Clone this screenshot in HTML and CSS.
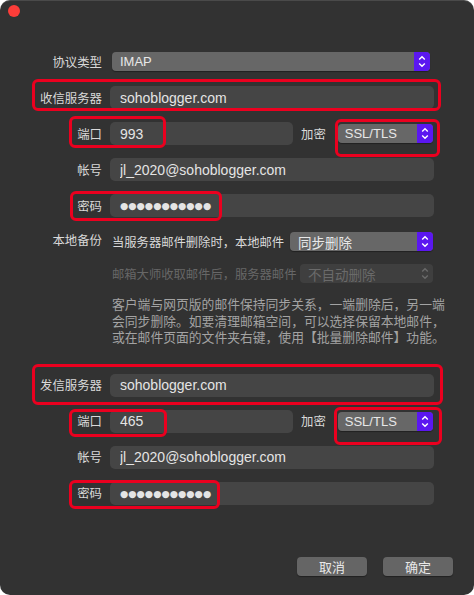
FILE: index.html
```html
<!DOCTYPE html>
<html lang="zh-CN">
<head>
<meta charset="UTF-8" />
<title>账户设置</title>
<link rel="stylesheet" href="styles.css">
</head>
<body>
<div class="window">
  <div class="titlebar"><span class="close"></span></div>

  <!-- 收信 -->
  <div class="form">
    <label class="lbl">协议类型</label>
    <div class="popup proto"><span>IMAP</span><span class="stepper"><svg viewBox="0 0 16 19" width="16" height="19"><path d="M5.2 7.6 8 4.8l2.8 2.8M5.2 11.4 8 14.2l2.8-2.8" /></svg></span></div>

    <label class="lbl">收信服务器</label>
    <input class="field" value="sohoblogger.com">

    <label class="lbl">端口</label>
    <div class="port-row">
      <input class="field port" value="993">
      <span class="lbl">加密</span>
      <div class="popup ssl"><span>SSL/TLS</span><span class="stepper"><svg viewBox="0 0 16 19" width="16" height="19"><path d="M5.2 7.6 8 4.8l2.8 2.8M5.2 11.4 8 14.2l2.8-2.8" /></svg></span></div>
    </div>

    <label class="lbl">帐号</label>
    <input class="field" value="jl_2020@sohoblogger.com">

    <label class="lbl">密码</label>
    <div class="field secret">●●●●●●●●●●●</div>

    <label class="lbl top">本地备份</label>
    <div class="backup">
      <div class="sub-row">
        <span>当服务器邮件删除时，本地邮件</span>
        <div class="popup sync"><span>同步删除</span><span class="stepper"><svg viewBox="0 0 16 19" width="16" height="19"><path d="M5.2 7.6 8 4.8l2.8 2.8M5.2 11.4 8 14.2l2.8-2.8" /></svg></span></div>
      </div>
      <div class="sub-row disabled">
        <span>邮箱大师收取邮件后，服务器邮件</span>
        <div class="popup off"><span>不自动删除</span><span class="stepper"><svg viewBox="0 0 16 19" width="16" height="19"><path d="M5.2 7.6 8 4.8l2.8 2.8M5.2 11.4 8 14.2l2.8-2.8" /></svg></span></div>
      </div>
      <p class="note">客户端与网页版的邮件保持同步关系，一端删除后，另一端<br>会同步删除。如要清理邮箱空间，可以选择保留本地邮件，<br>或在邮件页面的文件夹右键，使用【批量删除邮件】功能。</p>
    </div>
  </div>

  <!-- 发信 -->
  <div class="form send">
    <label class="lbl">发信服务器</label>
    <input class="field" value="sohoblogger.com">

    <label class="lbl">端口</label>
    <div class="port-row">
      <input class="field port" value="465">
      <span class="lbl">加密</span>
      <div class="popup ssl"><span>SSL/TLS</span><span class="stepper"><svg viewBox="0 0 16 19" width="16" height="19"><path d="M5.2 7.6 8 4.8l2.8 2.8M5.2 11.4 8 14.2l2.8-2.8" /></svg></span></div>
    </div>

    <label class="lbl">帐号</label>
    <input class="field" value="jl_2020@sohoblogger.com">

    <label class="lbl">密码</label>
    <div class="field secret">●●●●●●●●●●●</div>
  </div>

  <div class="actions">
    <button class="btn">取消</button>
    <button class="btn">确定</button>
  </div>

  <!-- 标注框 -->
  <div class="mark mark-in-host"></div>
  <div class="mark mark-in-port"></div>
  <div class="mark mark-in-ssl"></div>
  <div class="mark mark-in-pass"></div>
  <div class="mark mark-out-host"></div>
  <div class="mark mark-out-port"></div>
  <div class="mark mark-out-ssl"></div>
  <div class="mark mark-out-pass"></div>
</div>
</body>
</html>
```

FILE: styles.css
```css
* { box-sizing: border-box; }
body {
  margin: 0;
  background: #fff;
  font-family: "Liberation Sans", "Noto Sans CJK SC", sans-serif;
}
.window {
  position: relative;
  width: 474px;
  height: 595px;
  background: #323232;
  border-radius: 10px;
  box-shadow: inset 0 1px 0 rgba(255,255,255,0.12);
  overflow: hidden;
}
.titlebar {
  height: 22px;
  display: flex;
  align-items: center;
  padding-left: 8px;
}
.close {
  width: 12px;
  height: 12px;
  border-radius: 50%;
  background: #fc3d39;
}
.form {
  display: grid;
  grid-template-columns: 102px 324px;
  grid-auto-rows: minmax(23px, auto);
  column-gap: 8px;
  row-gap: 13px;
  align-items: center;
  margin-top: 28px;
}
.form.send { margin-top: 27px; }
.lbl {
  justify-self: end;
  font-size: 12.4px;
  color: #d9d9d9;
  white-space: nowrap;
}
.lbl.top {
  align-self: start;
  line-height: 23px;
}
.field {
  height: 23px;
  width: 100%;
  border: none;
  border-radius: 5px;
  background: #454545;
  color: #e4e4e4;
  font-family: inherit;
  font-size: 14px;
  padding: 0 10px;
  outline: none;
  margin: 0;
}
.secret {
  display: flex;
  align-items: center;
  font-family: "DejaVu Sans", sans-serif;
  font-size: 9.5px;
  letter-spacing: 0;
  color: #e4e4e4;
}
.popup {
  display: flex;
  align-items: center;
  height: 19px;
  background: #676767;
  border-radius: 4px;
  padding-left: 8px;
  font-size: 13px;
  color: #e8e8e8;
  overflow: hidden;
  box-shadow: 0 1px 1px rgba(0,0,0,0.35);
}
.stepper {
  margin-left: auto;
  width: 16px;
  height: 19px;
  flex: none;
  background: #5b17f0;
}
.stepper svg { display: block; }
.stepper path {
  fill: none;
  stroke: #fff;
  stroke-width: 1.4;
}
.popup.proto { margin: 0 4px 0 2px; }
.port-row {
  display: flex;
  align-items: center;
}
.port { width: 183px; flex: none; }
.port-row .lbl { margin-left: 8px; }
.port-row .popup.ssl {
  flex: 1;
  margin: 0 1.5px 0 12px;
  padding-left: 7px;
}
.backup {
  display: flex;
  flex-direction: column;
}
.sub-row {
  display: flex;
  align-items: center;
  height: 23px;
  font-size: 12.3px;
  color: #d9d9d9;
  padding-left: 2px;
}
.sub-row .popup {
  margin-left: auto;
  margin-right: 1px;
  font-size: 13.5px;
}
.popup.sync { width: 143px; }
.sub-row.disabled {
  margin-top: 9px;
  color: #676767;
}
.popup.off {
  width: 133px;
  background: #3f3f3f;
  color: #6a6a6a;
  box-shadow: none;
}
.popup.off .stepper { background: none; }
.popup.off .stepper path { stroke: #6a6a6a; }
.note {
  margin: 12px 0 0 2px;
  font-size: 12.8px;
  line-height: 16.5px;
  color: #a3a3a3;
  white-space: nowrap;
}
.actions {
  display: flex;
  justify-content: flex-end;
  gap: 16px;
  margin-top: 52px;
  padding-right: 21px;
}
.btn {
  width: 70px;
  height: 19px;
  border: none;
  border-radius: 4px;
  background: #656565;
  color: #e8e8e8;
  font-family: inherit;
  font-size: 13px;
  padding: 0;
  box-shadow: 0 1px 1px rgba(0,0,0,0.35);
}
/* red annotation boxes */
.mark {
  position: absolute;
  border: 3px solid #eb001f;
  border-radius: 6px;
  pointer-events: none;
}
.mark-in-host { left: 32px; top: 79px; width: 409px; height: 32px; }
.mark-in-port { left: 69px; top: 116px; width: 97px; height: 32px; }
.mark-in-ssl { left: 335px; top: 119px; width: 105px; height: 38px; }
.mark-in-pass { left: 70px; top: 191px; width: 152px; height: 30px; }
.mark-out-host { left: 32px; top: 364px; width: 411px; height: 41px; }
.mark-out-port { left: 69px; top: 409px; width: 98px; height: 28px; }
.mark-out-ssl { left: 334px; top: 407px; width: 108px; height: 38px; }
.mark-out-pass { left: 69px; top: 480px; width: 151px; height: 29px; }
```
